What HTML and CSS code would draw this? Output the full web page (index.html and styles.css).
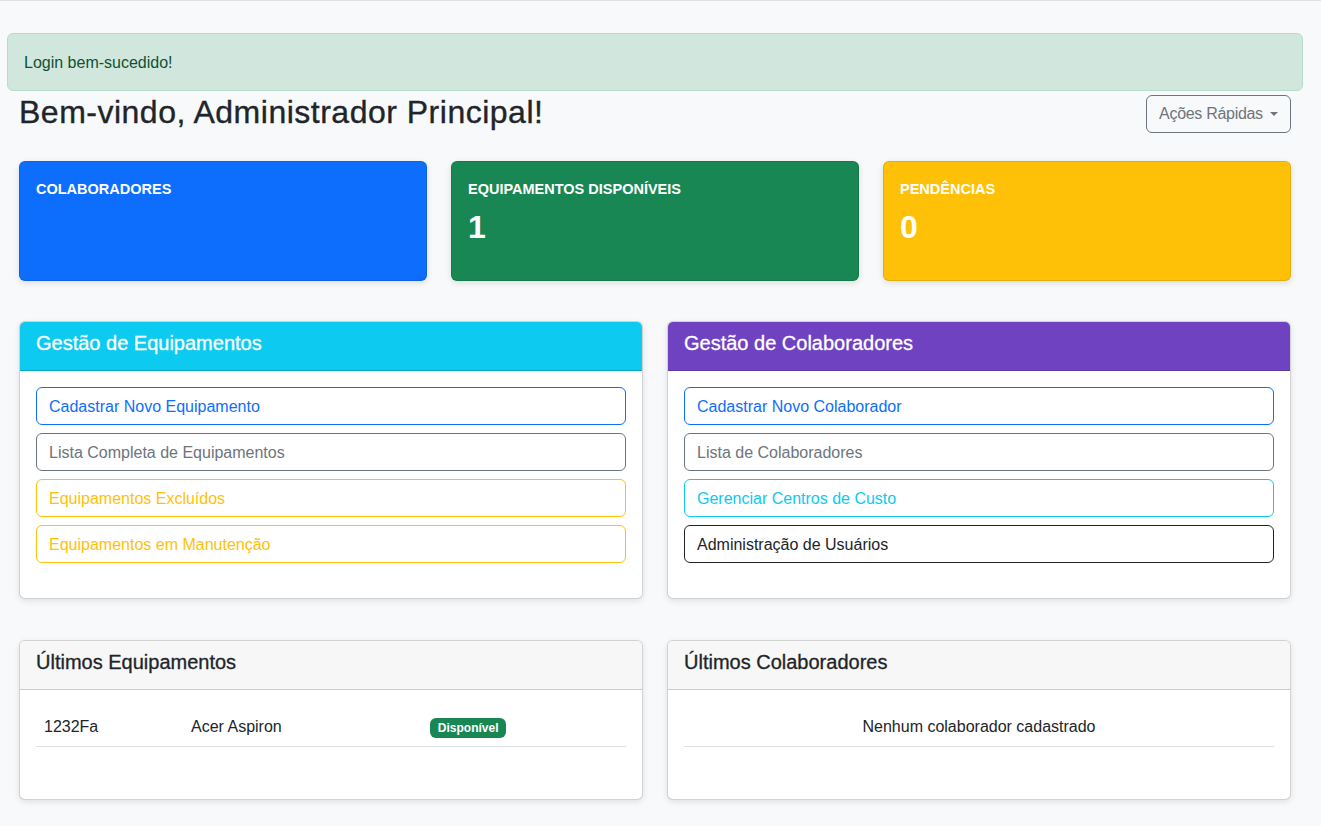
FILE: index.html
```html
<!DOCTYPE html>
<html lang="pt-BR">
<head>
<meta charset="utf-8">
<title>Painel</title>
<link rel="stylesheet" href="styles.css">
</head>
<body>
<div class="topline"></div>
<div class="page">
  <div class="alert">Login bem-sucedido!</div>
  <main class="main">
    <div class="title-row">
      <h1 class="page-title">Bem-vindo, Administrador Principal!</h1>
      <button class="btn-quick" type="button">Ações Rápidas<span class="caret"></span></button>
    </div>

    <div class="stats">
      <div class="stat stat-blue">
        <div class="stat-label">Colaboradores</div>
      </div>
      <div class="stat stat-green">
        <div class="stat-label">Equipamentos Disponíveis</div>
        <div class="stat-value">1</div>
      </div>
      <div class="stat stat-yellow">
        <div class="stat-label">Pendências</div>
        <div class="stat-value">0</div>
      </div>
    </div>

    <div class="grid2 mgmt">
      <section class="card">
        <div class="card-header head-info"><h2 class="card-title">Gestão de Equipamentos</h2></div>
        <div class="card-body btn-list">
          <a class="obtn obtn-primary" href="#">Cadastrar Novo Equipamento</a>
          <a class="obtn obtn-secondary" href="#">Lista Completa de Equipamentos</a>
          <a class="obtn obtn-warning" href="#">Equipamentos Excluídos</a>
          <a class="obtn obtn-warning" href="#">Equipamentos em Manutenção</a>
        </div>
      </section>
      <section class="card">
        <div class="card-header head-purple"><h2 class="card-title">Gestão de Colaboradores</h2></div>
        <div class="card-body btn-list">
          <a class="obtn obtn-primary" href="#">Cadastrar Novo Colaborador</a>
          <a class="obtn obtn-secondary" href="#">Lista de Colaboradores</a>
          <a class="obtn obtn-info" href="#">Gerenciar Centros de Custo</a>
          <a class="obtn obtn-dark" href="#">Administração de Usuários</a>
        </div>
      </section>
    </div>

    <div class="grid2 latest">
      <section class="card">
        <div class="card-header head-light"><h2 class="card-title">Últimos Equipamentos</h2></div>
        <div class="card-body table-body">
          <table class="table">
            <colgroup><col class="c1"><col class="c2"><col></colgroup>
            <tbody>
              <tr>
                <td>1232Fa</td>
                <td>Acer Aspiron</td>
                <td><span class="badge">Disponível</span></td>
              </tr>
            </tbody>
          </table>
        </div>
      </section>
      <section class="card">
        <div class="card-header head-light"><h2 class="card-title">Últimos Colaboradores</h2></div>
        <div class="card-body table-body">
          <table class="table">
            <tbody>
              <tr><td class="center">Nenhum colaborador cadastrado</td></tr>
            </tbody>
          </table>
        </div>
      </section>
    </div>
  </main>
</div>
</body>
</html>
```
FILE: styles.css
```css
* { box-sizing: border-box; }

body {
  margin: 0;
  background: #f8f9fa;
  font-family: "Liberation Sans", Arial, sans-serif;
  font-size: 16px;
  line-height: 1.5;
  color: #212529;
}

.topline { height: 1px; background: #dee2e6; }

.page { padding: 32px 18px 24px 7px; }

.alert {
  padding: 17px 16px 15px;
  border: 1px solid #badbcc;
  background: #d1e7dd;
  color: #0f5132;
  border-radius: 6px;
}

.main { padding: 0 12px; }

.title-row {
  display: flex;
  justify-content: space-between;
  align-items: flex-start;
  margin-top: 2px;
}

.page-title {
  margin: 0;
  font-size: 32px;
  font-weight: normal;
  line-height: 1.2;
  letter-spacing: 0.5px;
  -webkit-text-stroke: 0.35px currentColor;
}

.btn-quick {
  margin-top: 2px;
  padding: 6px 12px;
  border: 1px solid #6c757d;
  border-radius: 6px;
  background: transparent;
  color: #6c757d;
  font-family: inherit;
  font-size: 16px;
  line-height: 1.5;
  letter-spacing: -0.3px;
  display: inline-flex;
  align-items: center;
}

.caret {
  display: inline-block;
  margin-left: 0.45em;
  border-top: 0.28em solid currentColor;
  border-left: 0.28em solid transparent;
  border-right: 0.28em solid transparent;
}

.stats {
  display: grid;
  grid-template-columns: repeat(3, 1fr);
  gap: 24px;
  margin-top: 28px;
}

.stat {
  height: 120px;
  padding: 19px 16px 16px;
  border-radius: 6px;
  border: 1px solid rgba(0, 0, 0, 0.1);
  color: #fff;
  box-shadow: 0 2px 6px rgba(0, 0, 0, 0.12);
}

.stat-blue { background: #0d6efd; }
.stat-green { background: #198754; }
.stat-yellow { background: #ffc107; }

.stat-label {
  font-size: 14.5px;
  font-weight: bold;
  text-transform: uppercase;
  line-height: 1.2;
  margin-bottom: 10px;
}

.stat-value {
  font-size: 32px;
  font-weight: bold;
  line-height: 1.2;
}

.grid2 {
  display: grid;
  grid-template-columns: 1fr 1fr;
  gap: 24px;
}

.mgmt { margin-top: 40px; }
.latest { margin-top: 41px; }

.card {
  background: #fff;
  border: 1px solid rgba(0, 0, 0, 0.175);
  border-radius: 6px;
  overflow: hidden;
  box-shadow: 0 2px 6px rgba(0, 0, 0, 0.1);
}

.card-header {
  padding: 9px 16px 15px;
  border-bottom: 1px solid rgba(0, 0, 0, 0.175);
}

.card-title {
  margin: 0;
  font-size: 20px;
  font-weight: normal;
  line-height: 1.2;
  -webkit-text-stroke: 0.3px currentColor;
}

.head-info { background: #0dcaf0; color: #fff; }
.head-purple { background: #6f42c1; color: #fff; }
.head-light { background: #f7f7f7; color: #212529; }

.card-body { padding: 16px 16px 35px; }

.btn-list {
  display: flex;
  flex-direction: column;
  gap: 8px;
}

.obtn {
  display: block;
  padding: 7px 12px 5px;
  border: 1px solid;
  border-radius: 6px;
  font-size: 16px;
  line-height: 1.5;
  text-decoration: none;
}

.obtn-primary { color: #0d6efd; border-color: #0d6efd; }
.obtn-secondary { color: #6c757d; border-color: #6c757d; }
.obtn-warning { color: #ffc107; border-color: #ffc107; }
.obtn-info { color: #0dcaf0; border-color: #0dcaf0; }
.obtn-dark { color: #212529; border-color: #212529; }

.table-body { padding: 16px 16px 36px; }

.table {
  width: 100%;
  border-collapse: collapse;
  table-layout: fixed;
  margin-bottom: 16px;
}

.table td {
  padding: 9px 8px 7px;
  border-bottom: 1px solid #dee2e6;
  vertical-align: middle;
}

.table .c1 { width: 147px; }
.table .c2 { width: 239px; }

.table td.center { text-align: center; }

.badge {
  display: inline-block;
  padding: 0.35em 0.65em;
  font-size: 12px;
  font-weight: bold;
  line-height: 1;
  color: #fff;
  background: #198754;
  border-radius: 6px;
  vertical-align: middle;
}
```
